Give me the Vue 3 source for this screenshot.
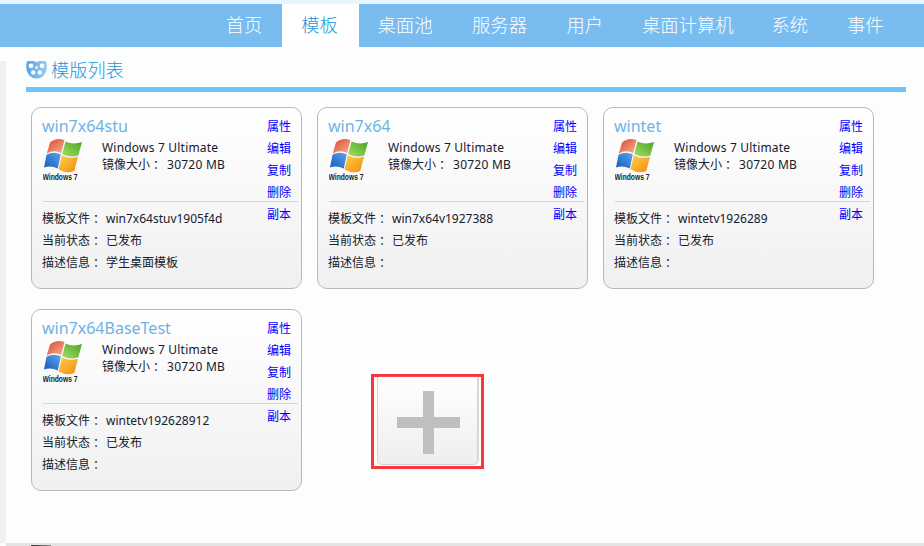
<script setup>
const navItems = ['首页', '模板', '桌面池', '服务器', '用户', '桌面计算机', '系统', '事件']
const activeItem = '模板'
const actions = ['属性', '编辑', '复制', '删除', '副本']
const templates = [
  { name: 'win7x64stu', file: 'win7x64stuv1905f4d', desc: '学生桌面模板' },
  { name: 'win7x64', file: 'win7x64v1927388', desc: '' },
  { name: 'wintet', file: 'wintetv1926289', desc: '' },
  { name: 'win7x64BaseTest', file: 'wintetv192628912', desc: '' },
]
</script>

<template>
  <div class="page">
    <nav class="nav">
      <a v-for="item in navItems" :key="item" class="nav-item" :class="{ active: item === activeItem }"><span>{{ item }}</span></a>
    </nav>
    <div class="body">
      <div class="gutter"></div>
      <main class="content">
        <header class="heading">
          <svg class="reel" width="22" height="18" viewBox="0 0 22 18">
            <defs>
              <linearGradient id="reelFill" x1="0" y1="0" x2="1" y2="0">
                <stop offset="0" stop-color="#58a6e6" />
                <stop offset="1" stop-color="#9acbf2" />
              </linearGradient>
            </defs>
            <path d="M1.500 0H19.500C21.300 2.500 21.300 8 19.600 11.500C17.800 15.500 14.500 17.500 10.700 17.500S3.400 15.500 1.500 11.500C-.2 8-.2 2.500 1.500 0Z" fill="url(#reelFill)" />
            <g fill="#fafdff">
              <circle cx="5" cy="4.800" r="2.400" />
              <circle cx="16" cy="4.800" r="2.400" />
              <circle cx="7.200" cy="11.500" r="2.200" />
              <circle cx="13.800" cy="11.500" r="2.200" />
              <circle cx="10.500" cy="6.500" r="1.300" />
              <path d="M8.500 0H12.500Q12 1 10.500 1T8.500 0Z" />
            </g>
          </svg>
          <h1>模版列表</h1>
        </header>
        <section class="cards">
          <article v-for="t in templates" :key="t.name" class="card">
            <div class="info">
              <h2>{{ t.name }}</h2>
              <div class="summary">
                <svg class="flag" width="44" height="44" viewBox="0 0 44 44">
                  <defs>
                    <linearGradient id="fr" x1="0" y1="0" x2="1" y2="1">
                      <stop offset="0" stop-color="#d9482c" /><stop offset="1" stop-color="#f8b096" />
                    </linearGradient>
                    <linearGradient id="fg" x1="1" y1="0" x2="0" y2="1">
                      <stop offset="0" stop-color="#48a522" /><stop offset="1" stop-color="#a5de66" />
                    </linearGradient>
                    <linearGradient id="fb" x1="0" y1="1" x2="1" y2="0">
                      <stop offset="0" stop-color="#1757b5" /><stop offset="1" stop-color="#59a7ee" />
                    </linearGradient>
                    <linearGradient id="fy" x1="1" y1="1" x2="0" y2="0">
                      <stop offset="0" stop-color="#f08c10" /><stop offset="1" stop-color="#ffd04a" />
                    </linearGradient>
                  </defs>
                  <path d="M7 4.500Q13 -1 21.500 2L18.200 15Q11 11.500 3.800 15.500Z" fill="url(#fr)" />
                  <path d="M22.500 3.500Q30.500 7.200 39 4L35.300 17.500Q27 20.300 19.200 16Z" fill="url(#fg)" />
                  <path d="M3.500 16.800Q10.500 12.800 17.800 16.300L14.800 30.500Q7.500 27 1 29.500Z" fill="url(#fb)" />
                  <path d="M18.800 17.300Q26.500 21.500 35 18.800L31.300 33Q23.500 36 15.500 31.500Z" fill="url(#fy)" />
                  <text x="-.5" y="41.500" textLength="35" lengthAdjust="spacingAndGlyphs">Windows 7</text>
                </svg>
                <div class="spec">
                  <p class="os">Windows 7 Ultimate</p>
                  <p>镜像大小<span class="colon">：</span><span class="size">30720 MB</span></p>
                </div>
              </div>
              <div class="rule"></div>
              <dl>
                <div><dt>模板文件<span class="colon">：</span></dt><dd class="file">{{ t.file }}</dd></div>
                <div class="status"><dt>当前状态<span class="colon">：</span></dt><dd>已发布</dd></div>
                <div><dt>描述信息<span class="colon">：</span></dt><dd>{{ t.desc }}</dd></div>
              </dl>
            </div>
            <ul class="actions">
              <li v-for="a in actions" :key="a">{{ a }}</li>
            </ul>
          </article>
          <div class="add">
            <div class="add-inner">
              <svg width="63" height="63" viewBox="0 0 63 63">
                <path d="M26 0H37V26H63V37H37V63H26V37H0V26H26Z" fill="#bfbfbf" />
              </svg>
            </div>
          </div>
        </section>
      </main>
    </div>
    <footer class="bottom"><div class="shade"></div></footer>
  </div>
</template>

<style>
body { background: #fcfefd; }
</style>

<style scoped>
* { box-sizing: border-box; margin: 0; padding: 0; }
.page {
  width: 924px; height: 546px; overflow: hidden;
  display: flex; flex-direction: column;
  background: #fcfefd; border-top: 4px solid #e9f5fd;
  font-family: "Noto Sans", "Noto Sans CJK SC", sans-serif;
  font-size: 12px; color: #14202c;
}
.nav {
  flex: none; height: 43px; padding-right: 20.5px;
  display: flex; justify-content: flex-end; background: #78bcf0;
}
.nav-item {
  padding: 0 19px; font: 300 18.3px/41px "Noto Sans CJK SC", sans-serif; color: #fff;
  min-width: 75.5px; white-space: nowrap;
}
.nav-item:nth-child(3), .nav-item:nth-child(4) { min-width: 94.5px; }
.nav-item.active { min-width: 76.3px; background: #fff; color: #1296db; }
.body { flex: 1; display: flex; min-height: 0; }
.gutter { width: 6px; margin-top: 14px; background: #f1f1f1; }
.content { flex: 1; padding: 10px 18px 0 20px; }
.heading {
  height: 35px; display: flex; align-items: flex-start;
  border-bottom: 5px solid #6bc6f8;
}
.reel { margin-top: 4px; }
h1 {
  margin-left: 3px; color: #1296db;
  font: 300 18.2px/24px "Noto Sans CJK SC", sans-serif;
}
.cards {
  padding: 15px 0 0 5px;
  display: grid; grid-template-columns: repeat(3, 271px); gap: 20px 15px;
}
.card {
  height: 182px; display: flex;
  border: 1px solid #b8b8b8; border-radius: 10px;
  background: linear-gradient(#fff, #f0f0f0);
}
.info { flex: none; width: 266px; padding: 8px 0 0 10px; }
h2 {
  height: 22px; font: 400 16px/20px "Noto Sans", sans-serif; color: #6db2e8;
}
.summary { height: 63px; display: flex; }
.flag { flex: none; margin-left: 1px; }
.flag text { font: 700 8.5px "Liberation Sans", sans-serif; fill: #222; }
.spec { margin-left: 15px; padding-top: 1px; line-height: 17px; white-space: nowrap; }
.os { letter-spacing: .2px; }
.size { margin-left: 5px; letter-spacing: .25px; }
.colon { font-family: "Noto Sans CJK TC", sans-serif; line-height: 1; vertical-align: -1px; }
.rule { height: 1px; margin-left: 1px; background: #cdd6de; }
dl { padding-top: 6px; }
dl > div { height: 22px; display: flex; line-height: 22px; white-space: nowrap; }
dt { width: 64px; }
.actions {
  list-style: none; flex: none; margin-left: -31px; width: 34px; padding: 8px 10px 0 0;
  color: #00f; line-height: 22px; white-space: nowrap;
}
.add {
  justify-self: start; width: 113px; height: 95px; margin: 65px 0 0 54px;
  padding: 0 4px 1px 3px; border: 3px solid #fb353b; background: #fcfefd;
}
.add-inner {
  width: 101px; height: 88px; display: flex; align-items: flex-end; justify-content: center;
  padding: 0 0 10px 2px; border: 1px solid #cdd3d7; border-top: 0;
  border-radius: 0 0 5px 5px; background: linear-gradient(#fff, #eee);
  box-shadow: 1px 0 1px #ddd;
}
.bottom { flex: none; height: 3px; margin-left: 6px; background: #e4e4e4; padding: 2px 0 0 25px; }
.shade { width: 20px; height: 1px; background: linear-gradient(90deg, #333, #888); }
</style>
